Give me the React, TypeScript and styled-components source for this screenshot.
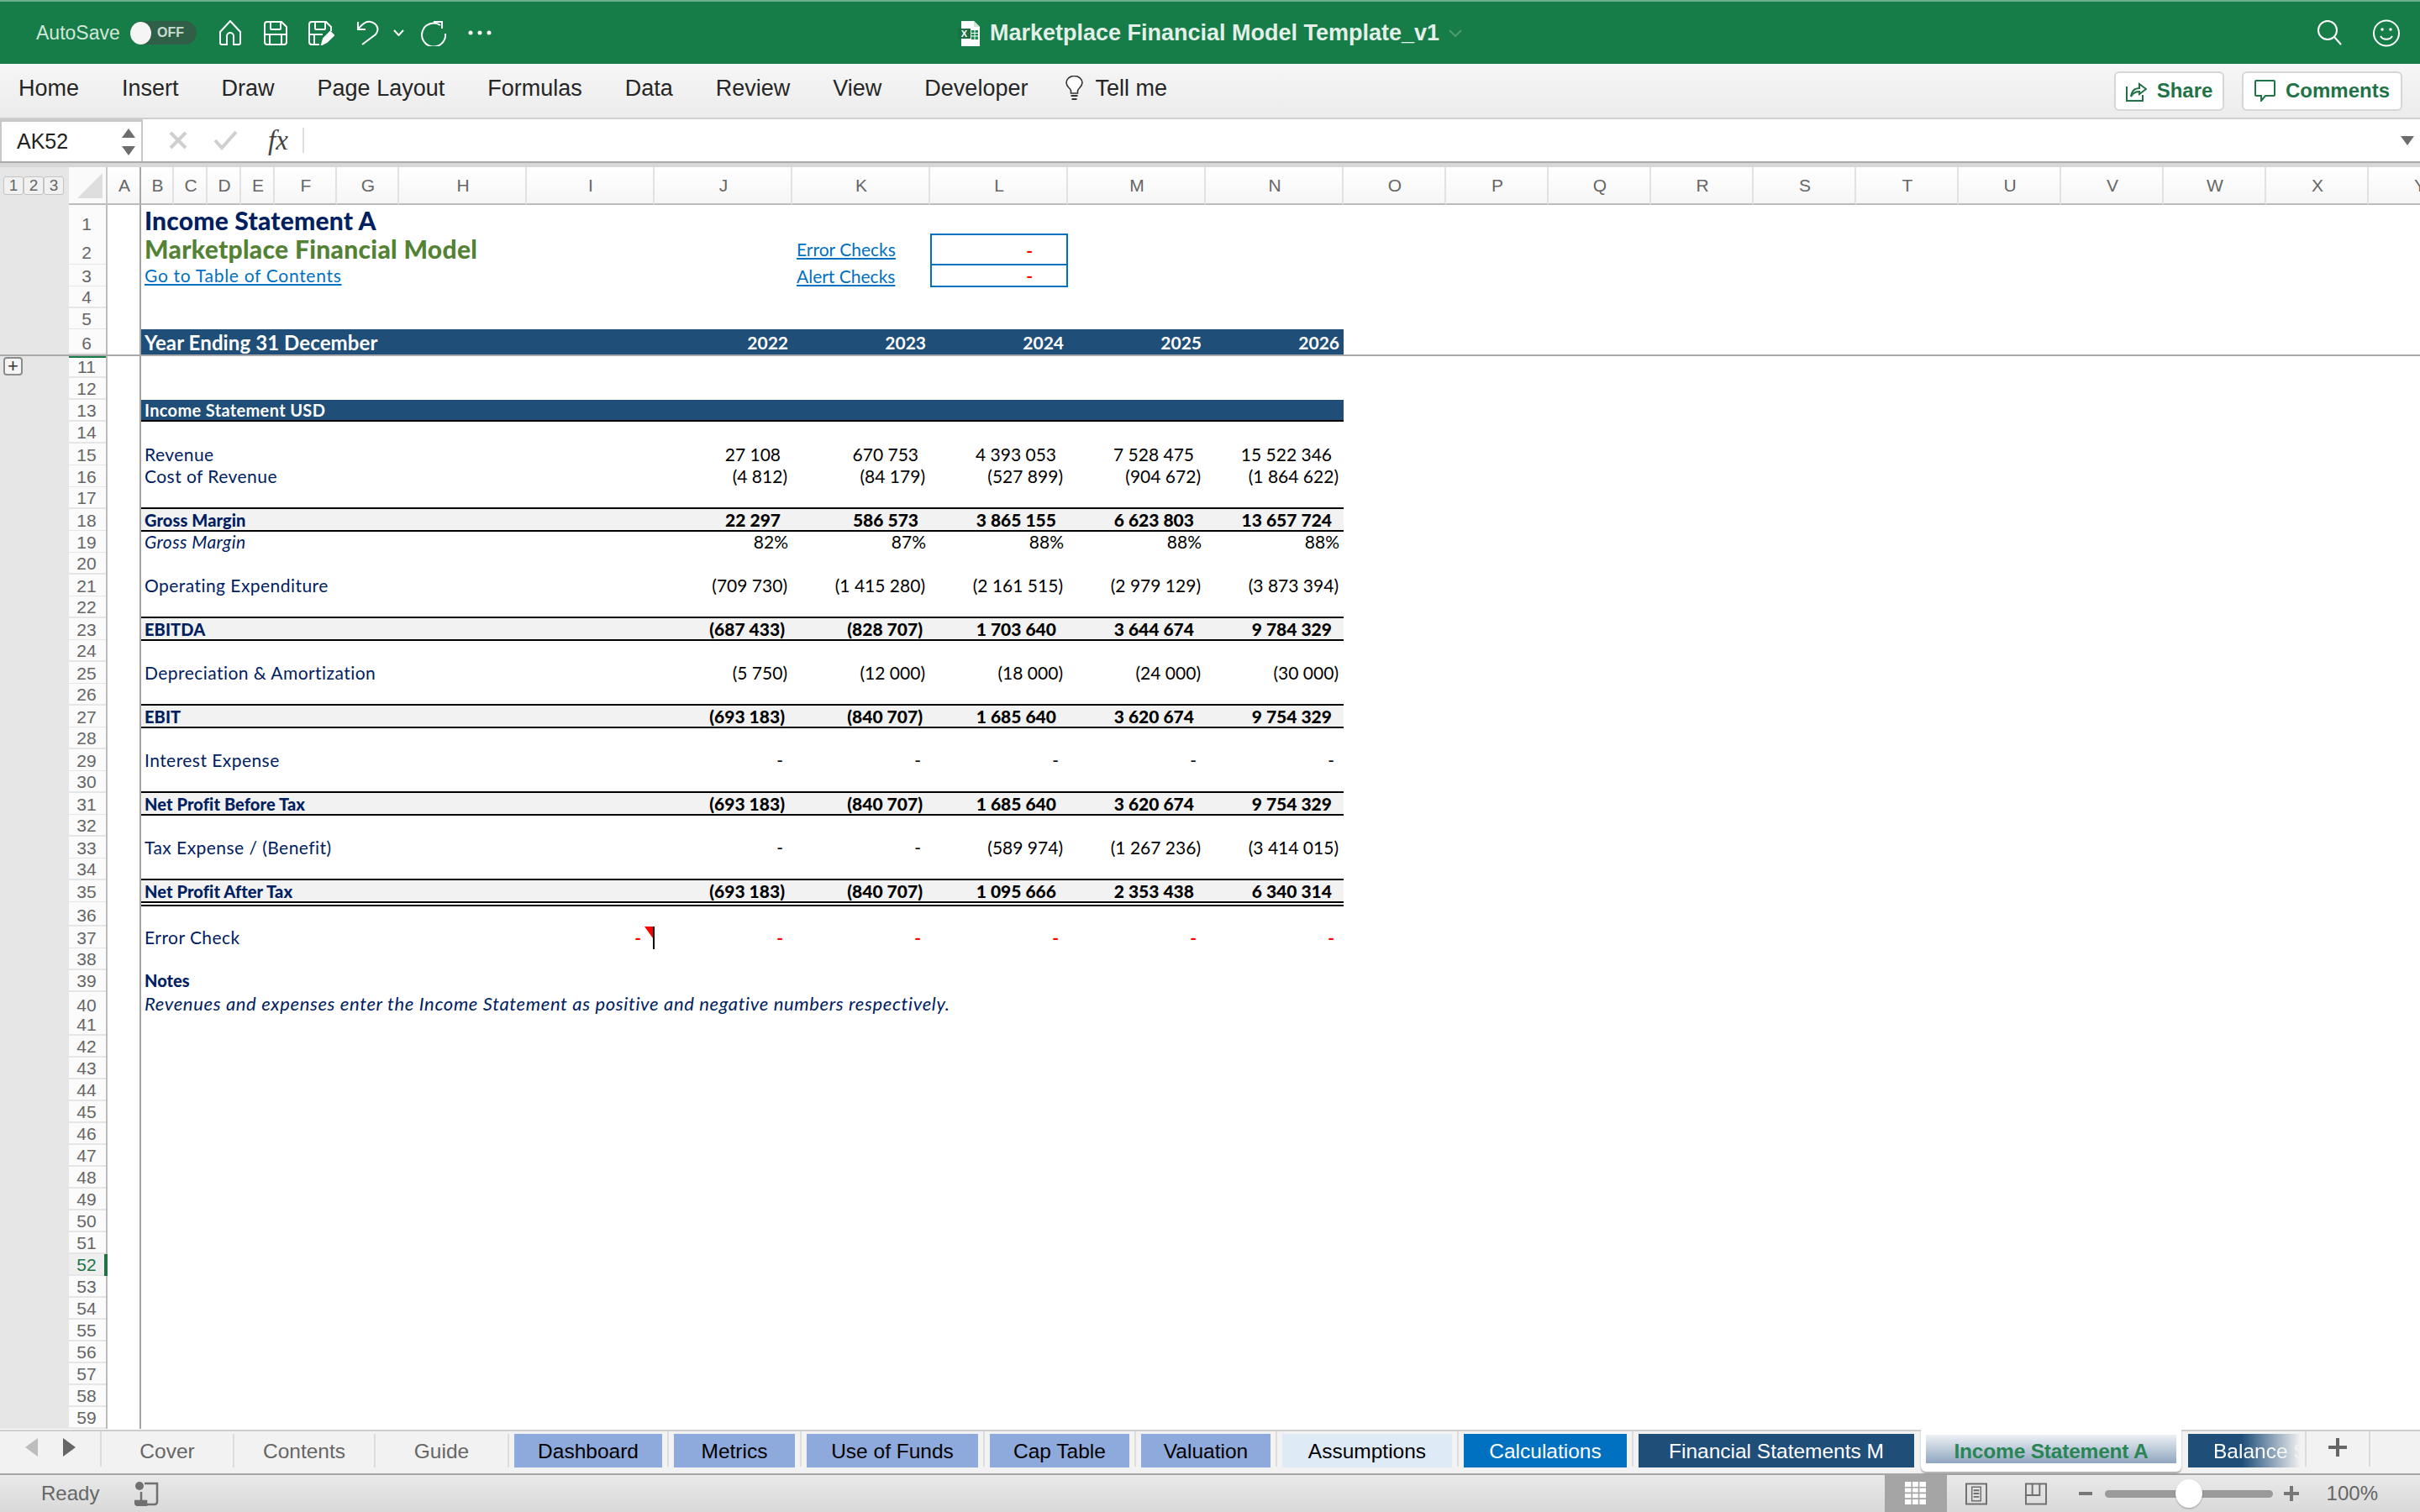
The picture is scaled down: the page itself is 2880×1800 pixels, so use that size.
import React from "react";
import styled, { createGlobalStyle } from "styled-components";

const UI_FONT = `"Liberation Sans", Arial, sans-serif`;
const CELL_FONT = `Lato, "Liberation Sans", sans-serif`;
const GREEN = "#167c48";
const NAVY = "#002060";
const BLUE_BAND = "#1f4e79";

const GlobalStyle = createGlobalStyle`
  html, body {
    margin: 0;
    padding: 0;
    width: 2880px;
    height: 1800px;
    overflow: hidden;
    background: #fff;
  }
  * { box-sizing: border-box; }
`;

const Page = styled.div`
  width: 2880px;
  height: 1800px;
  display: flex;
  flex-direction: column;
  font-family: ${UI_FONT};
`;

/* ---------- title bar ---------- */

const TitleBar = styled.header`
  height: 76px;
  flex: none;
  background: ${GREEN};
  border-top: 2px solid #6fae8d;
  display: grid;
  grid-template-columns: 1fr auto 1fr;
  align-items: center;
  color: #fff;
`;

const QuickAccess = styled.div`
  display: flex;
  align-items: center;
  padding-left: 43px;
`;

const AutoSaveLabel = styled.span`
  font-size: 23px;
  color: #d3e6db;
  width: 112px;
`;

const Toggle = styled.div`
  width: 79px;
  height: 28px;
  border-radius: 14px;
  background: #2f5f46;
  display: flex;
  align-items: center;
  gap: 7px;
  margin-right: 26px;
`;

const ToggleThumb = styled.span`
  width: 25px;
  height: 27px;
  border-radius: 50%;
  background: #f5f5f5;
`;

const ToggleText = styled.span`
  font-size: 16px;
  font-weight: 700;
  color: #c9dcd1;
`;

const QuickIcon = styled.svg<{ $gap: number; $stroke?: string }>`
  margin-right: ${(p) => p.$gap}px;
  flex: none;
  fill: none;
  stroke: ${(p) => p.$stroke || "#fff"};
  stroke-width: 2;
`;

const DocTitle = styled.div`
  display: flex;
  align-items: center;
  gap: 11px;
  font-size: 27px;
  font-weight: 700;
  color: #e4efe9;
  padding-top: 1px;
`;

const TitleRight = styled.div`
  display: flex;
  justify-content: flex-end;
  align-items: center;
  gap: 37px;
  padding-right: 24px;
`;

/* ---------- ribbon ---------- */

const Ribbon = styled.nav`
  height: 66px;
  flex: none;
  background: linear-gradient(#f6f6f6, #ececec);
  border-bottom: 2px solid #cfcfcf;
  display: flex;
  align-items: center;
  padding: 0 21px 6px 22px;
  gap: 51px;
`;

const RibbonTab = styled.span`
  font-size: 27px;
  color: #262626;
`;

const TellMe = styled.span`
  display: flex;
  align-items: center;
  gap: 14px;
  font-size: 27px;
  color: #262626;
  margin-left: -6px;
`;

const RibbonActions = styled.div`
  margin-left: auto;
  display: flex;
  gap: 21px;
  margin-top: 6px;
`;

const RibbonButton = styled.button<{ $w: number }>`
  width: ${(p) => p.$w}px;
  height: 47px;
  background: #fff;
  border: 2px solid #d6d6d6;
  border-radius: 6px;
  display: flex;
  align-items: center;
  justify-content: center;
  gap: 12px;
  padding: 0;
  font-family: ${UI_FONT};
  font-size: 24px;
  font-weight: 700;
  color: #217346;
`;

/* ---------- formula bar ---------- */

const FormulaBar = styled.div`
  height: 57px;
  flex: none;
  background: #fff;
  border-bottom: 5px solid #d8d8d8;
  box-shadow: inset 0 -2px 0 #aaa;
  display: flex;
  align-items: stretch;
`;

const NameBox = styled.div`
  width: 170px;
  height: 50px;
  border: 2px solid #c8c8c8;
  border-top-width: 3px;
  border-bottom: none;
  display: flex;
  align-items: center;
  justify-content: space-between;
  padding: 0 7px 0 18px;
  font-size: 25px;
  color: #222;
`;

const Steppers = styled.div`
  display: flex;
  flex-direction: column;
  gap: 10px;
`;

const Triangle = styled.span<{ $down?: boolean; $color?: string }>`
  width: 0;
  height: 0;
  border-left: 8px solid transparent;
  border-right: 8px solid transparent;
  ${(p) =>
    p.$down
      ? `border-top: 11px solid ${p.$color || "#6d6d6d"};`
      : `border-bottom: 11px solid ${p.$color || "#6d6d6d"};`}
`;

const FormulaTools = styled.div`
  display: flex;
  align-items: center;
  height: 50px;
  padding-left: 31px;
  gap: 31px;
`;

const FxLabel = styled.span`
  font-family: "Liberation Serif", serif;
  font-style: italic;
  font-size: 33px;
  color: #444;
  width: 32px;
  margin-left: 4px;
`;

const FormulaDivider = styled.span`
  width: 2px;
  height: 30px;
  background: #dedede;
  margin-left: -22px;
`;

const FormulaInput = styled.div`
  flex: 1;
  height: 50px;
  display: flex;
  align-items: center;
  justify-content: flex-end;
  padding-right: 7px;
`;

/* ---------- column headers ---------- */

const ColumnStrip = styled.div`
  height: 45px;
  flex: none;
  display: flex;
  overflow: hidden;
`;

const OutlineCorner = styled.div`
  width: 82px;
  flex: none;
  background: #e6e6e6;
  display: flex;
  align-items: center;
  padding: 0 0 0 4px;
  border-bottom: 2px solid #e6e6e6;
`;

const LevelButton = styled.span`
  width: 24px;
  height: 22px;
  border: 1px solid #c4c4c4;
  border-radius: 3px;
  background: #f1f1f1;
  display: flex;
  align-items: center;
  justify-content: center;
  font-size: 19px;
  color: #666;
`;

const SelectAll = styled.div`
  width: 46px;
  flex: none;
  background: #fafafa;
  border-right: 2px solid #c9c9c9;
  border-bottom: 2px solid #bbb;
  display: flex;
  align-items: center;
  padding-left: 10px;
`;

const ColumnHead = styled.div<{ $w: number; $strong?: boolean }>`
  width: ${(p) => p.$w}px;
  flex: none;
  background: linear-gradient(#fff, #f6f6f6);
  border-right: 2px solid ${(p) => (p.$strong ? "#a8a8a8" : "#e2e2e2")};
  border-bottom: 2px solid #bbb;
  display: flex;
  align-items: center;
  justify-content: center;
  padding-left: 2px;
  font-size: 21px;
  color: #666;
`;

/* ---------- sheet ---------- */

const Sheet = styled.main`
  flex: 1;
  min-height: 0;
  overflow: hidden;
  background: #fff;
  font-family: ${CELL_FONT};
`;

const Row = styled.div<{ $h: number }>`
  height: ${(p) => p.$h}px;
  display: grid;
  grid-template-columns: 82px 46px 40px 459px 152px repeat(5, 164px) 1fr;
`;

const Gutter = styled.div`
  background: #e6e6e6;
  padding: 1px 0 0 4px;
`;

const OutlinePlus = styled.span`
  width: 23px;
  height: 22px;
  border: 2px solid #8c8c8c;
  border-radius: 4px;
  background: #f5f5f5;
  display: flex;
  align-items: center;
  justify-content: center;
  font-family: ${UI_FONT};
  font-size: 22px;
  line-height: 1;
  color: #333;
`;

const RowHead = styled.div<{ $active?: boolean; $topGreen?: boolean; $lift?: number }>`
  background: ${(p) => (p.$active ? "#efefef" : "#fbfbfb")};
  border-right: ${(p) => (p.$active ? `4px solid #217346` : "2px solid #bcbcbc")};
  box-shadow: inset 0 -2px 0 #e6e6e6
    ${(p) => (p.$topGreen ? `, inset 0 2px 0 ${GREEN}` : "")};
  font-family: ${UI_FONT};
  font-size: 21px;
  line-height: 26px;
  color: ${(p) => (p.$active ? "#217346" : "#666")};
  display: flex;
  align-items: flex-end;
  justify-content: center;
  padding-right: ${(p) => (p.$active ? "0" : "2px")};
  padding-bottom: ${(p) => p.$lift || 0}px;
`;

const FrozenA = styled.div`
  border-right: 2px solid #a4a4a4;
`;

type Band = "none" | "year" | "section" | "total" | "grand";

const bandCss = (b: Band) => {
  switch (b) {
    case "year":
      return `background: ${BLUE_BAND}; color: #fff; font-weight: 700;`;
    case "section":
      return `background: ${BLUE_BAND}; color: #fff; font-weight: 700; border-bottom: 2px solid #000;`;
    case "total":
      return `background: #f2f2f2; font-weight: 900; border-bottom: 2px solid #000; box-shadow: 0 -2px 0 #000;`;
    case "grand":
      return `background: #f2f2f2; font-weight: 900; border-bottom: 2px solid #000; box-shadow: 0 -2px 0 #000, 0 2px 0 #fff, 0 4px 0 #000;`;
    default:
      return "padding-bottom: 2px;";
  }
};

const LabelCell = styled.div<{ $band: Band; $span?: boolean }>`
  ${(p) => p.$span && "grid-column: span 2;"}
  ${(p) => bandCss(p.$band)}
  display: flex;
  align-items: center;
  padding-left: 4px;
  white-space: nowrap;
  font-size: 21px;
`;

const LabelText = styled.span<{ $tone?: string; $size?: number; $spacing?: number; $weight?: number; $italic?: boolean }>`
  color: ${(p) => p.$tone || NAVY};
  font-size: ${(p) => p.$size || 21}px;
  letter-spacing: ${(p) => p.$spacing || 0}px;
  ${(p) => p.$weight && `font-weight: ${p.$weight};`}
  ${(p) => p.$italic && "font-style: italic;"}
`;

const LinkText = styled.a<{ $spacing?: number }>`
  color: #0070c0;
  text-decoration: underline;
  font-size: 21px;
  letter-spacing: ${(p) => p.$spacing || 0}px;
  white-space: nowrap;
`;

const NumCell = styled.div<{ $band: Band; $pad: number; $tone?: string; $size?: number }>`
  ${(p) => bandCss(p.$band)}
  display: flex;
  align-items: center;
  justify-content: flex-end;
  padding-right: ${(p) => p.$pad}px;
  white-space: nowrap;
  font-size: ${(p) => p.$size || 21}px;
  color: ${(p) => p.$tone || (p.$band === "year" ? "#fff" : "#000")};
  ${(p) => p.$tone && "font-weight: 700;"}
`;

const NoteCell = styled(NumCell)`
  position: relative;
  border-right: 2px solid #000;
`;

const CommentFlag = styled.span`
  position: absolute;
  top: 0;
  right: 0;
  width: 0;
  height: 0;
  border-left: 10px solid transparent;
  border-top: 14px solid #f00;
`;

const LinkCell = styled.div<{ $lift?: number }>`
  display: flex;
  align-items: center;
  padding-left: 5px;
  padding-bottom: ${(p) => p.$lift || 0}px;
`;

const CheckBoxCell = styled.div<{ $first?: boolean }>`
  border: 2px solid #0070c0;
  ${(p) => !p.$first && "border-top: none;"}
  display: flex;
  align-items: center;
  justify-content: flex-end;
  padding-right: 40px;
  color: #f00;
  font-size: 21px;
  font-weight: 700;
`;

const FreezeLine = styled.div`
  height: 2px;
  background: #a9a9a9;
`;

const Filler = styled.div``;

/* ---------- sheet tabs ---------- */

const TabBar = styled.div`
  height: 54px;
  flex: none;
  background: #f2f2f2;
  border-top: 2px solid #cdcdcd;
  border-bottom: 2px solid #a6a6a6;
  display: flex;
  align-items: stretch;
`;

const TabNav = styled.div`
  width: 121px;
  flex: none;
  display: flex;
  align-items: center;
  gap: 30px;
  padding: 0 0 4px 30px;
  border-right: 2px solid #dcdcdc;
  margin-bottom: 8px;
`;

const NavArrow = styled.span<{ $left?: boolean; $color: string }>`
  width: 0;
  height: 0;
  border-top: 11px solid transparent;
  border-bottom: 11px solid transparent;
  ${(p) => (p.$left ? `border-right: 15px solid ${p.$color};` : `border-left: 15px solid ${p.$color};`)}
`;

const TabSlot = styled.div<{ $last?: boolean; $tight?: boolean }>`
  flex: none;
  padding: ${(p) => (p.$tight ? "3px 5px 0 0" : p.$last ? "3px 0 0 6px" : "3px 6px 0")};
  border-right: ${(p) => (p.$last ? "none" : "2px solid #dcdcdc")};
  margin-bottom: 8px;
  display: flex;
`;

const PlainTab = styled.div<{ $w: number }>`
  width: ${(p) => p.$w}px;
  flex: none;
  height: 40px;
  margin-top: 3px;
  border-right: 2px solid #dcdcdc;
  display: flex;
  align-items: center;
  justify-content: center;
  padding-top: 1px;
  font-size: 24.5px;
  color: #666;
`;

const ColorTab = styled.div<{ $w: number; $bg: string; $fg: string }>`
  width: ${(p) => p.$w}px;
  height: 40px;
  background: ${(p) => p.$bg};
  color: ${(p) => p.$fg};
  display: flex;
  align-items: center;
  justify-content: center;
  padding-top: 1px;
  font-size: 24.5px;
  white-space: nowrap;
`;

const ActiveTabFrame = styled.div`
  width: 310px;
  flex: none;
  margin: -2px 8px 0 8px;
  height: 50px;
  padding: 6px 6px 0;
  background: #fff;
  border-radius: 0 0 6px 6px;
  box-shadow: 0 2px 2px rgba(0, 0, 0, 0.3);
`;

const ActiveTabFace = styled.div`
  height: 34px;
  background: linear-gradient(#eef1f5, #8fa6c0);
  display: flex;
  align-items: center;
  justify-content: center;
  font-size: 24.5px;
  font-weight: 700;
  color: #2a8555;
  letter-spacing: -0.2px;
  padding-top: 5px;
`;

const FadingTab = styled(ColorTab)`
  overflow: hidden;
  justify-content: flex-start;
  padding-left: 30px;
  -webkit-mask-image: linear-gradient(to right, #000 48%, transparent 100%);
  mask-image: linear-gradient(to right, #000 48%, transparent 100%);
`;

const AddTab = styled.div`
  width: 76px;
  flex: none;
  margin-bottom: 8px;
  border-right: 2px solid #dcdcdc;
  display: flex;
  align-items: center;
  justify-content: center;
  padding-bottom: 4px;
`;

/* ---------- status bar ---------- */

const StatusBar = styled.footer`
  height: 44px;
  flex: none;
  background: linear-gradient(#e9e9e9, #d9d9d9);
  display: flex;
  align-items: center;
  padding-left: 49px;
`;

const StatusText = styled.span`
  font-size: 24px;
  color: #666;
  width: 111px;
`;

const ViewControls = styled.div`
  margin-left: auto;
  height: 100%;
  display: flex;
  align-items: center;
  padding-right: 50px;
`;

const ViewButton = styled.div<{ $active?: boolean; $ml?: number }>`
  height: 100%;
  width: ${(p) => (p.$active ? "74px" : "26px")};
  margin-left: ${(p) => p.$ml || 0}px;
  background: ${(p) => (p.$active ? "#a5a5a5" : "transparent")};
  display: flex;
  align-items: center;
  justify-content: center;
`;

const ZoomMinus = styled.span`
  width: 16px;
  height: 4px;
  background: #777;
  margin-left: 38px;
`;

const ZoomTrack = styled.div`
  position: relative;
  width: 200px;
  height: 9px;
  border-radius: 5px;
  background: #9a9a9a;
  margin-left: 15px;
`;

const ZoomThumb = styled.span`
  position: absolute;
  left: 84px;
  top: -13px;
  width: 32px;
  height: 34px;
  border-radius: 50%;
  background: #fff;
  box-shadow: 0 1px 2px rgba(0, 0, 0, 0.3);
`;

const ZoomPlus = styled.svg`
  margin-left: 13px;
  flex: none;
`;

const ZoomText = styled.span`
  font-size: 24px;
  color: #666;
  margin-left: 33px;
`;

/* ---------- data ---------- */

const COLUMNS: [string, number][] = [
  ["A", 40], ["B", 39], ["C", 40], ["D", 40], ["E", 40], ["F", 74], ["G", 74], ["H", 152], ["I", 152],
  ["J", 164], ["K", 164], ["L", 164], ["M", 164], ["N", 164],
  ["O", 122], ["P", 122], ["Q", 122], ["R", 122], ["S", 122], ["T", 122], ["U", 122], ["V", 122], ["W", 122], ["X", 122], ["Y", 122],
];

type DataRow = {
  label?: string;
  band?: Band;
  italic?: boolean;
  values?: string[];
  red?: boolean;
};

const DASHES = ["-", "-", "-", "-", "-"];

const DATA: Record<number, DataRow> = {
  13: { label: "Income Statement USD", band: "section" },
  15: { label: "Revenue", values: ["27 108", "670 753", "4 393 053", "7 528 475", "15 522 346"] },
  16: { label: "Cost of Revenue", values: ["(4 812)", "(84 179)", "(527 899)", "(904 672)", "(1 864 622)"] },
  18: { label: "Gross Margin", band: "total", values: ["22 297", "586 573", "3 865 155", "6 623 803", "13 657 724"] },
  19: { label: "Gross Margin", italic: true, values: ["82%", "87%", "88%", "88%", "88%"] },
  21: { label: "Operating Expenditure", values: ["(709 730)", "(1 415 280)", "(2 161 515)", "(2 979 129)", "(3 873 394)"] },
  23: { label: "EBITDA", band: "total", values: ["(687 433)", "(828 707)", "1 703 640", "3 644 674", "9 784 329"] },
  25: { label: "Depreciation & Amortization", values: ["(5 750)", "(12 000)", "(18 000)", "(24 000)", "(30 000)"] },
  27: { label: "EBIT", band: "total", values: ["(693 183)", "(840 707)", "1 685 640", "3 620 674", "9 754 329"] },
  29: { label: "Interest Expense", values: DASHES },
  31: { label: "Net Profit Before Tax", band: "total", values: ["(693 183)", "(840 707)", "1 685 640", "3 620 674", "9 754 329"] },
  33: { label: "Tax Expense / (Benefit)", values: ["-", "-", "(589 974)", "(1 267 236)", "(3 414 015)"] },
  35: { label: "Net Profit After Tax", band: "grand", values: ["(693 183)", "(840 707)", "1 095 666", "2 353 438", "6 340 314"] },
  37: { label: "Error Check", values: DASHES, red: true },
};

const padFor = (v: string, bold: boolean) => {
  if (v === "-") return 11;
  if (v.endsWith(")")) return bold ? 9 : 6;
  if (v.endsWith("%")) return 5;
  return 14;
};

const BODY_ROWS = Array.from({ length: 49 }, (_, i) => i + 11);

const YEARS = ["2022", "2023", "2024", "2025", "2026"];

const BLUE_TABS: [string, number][] = [
  ["Dashboard", 176],
  ["Metrics", 144],
  ["Use of Funds", 204],
  ["Cap Table", 166],
  ["Valuation", 154],
];

/* ---------- small drawings ---------- */

const SaveShape = () => (
  <>
    <path d="M4 1H21L27 7V25a3 3 0 0 1-3 3H4a3 3 0 0 1-3-3V4a3 3 0 0 1 3-3Z" />
    <path d="M8 1V9a1 1 0 0 0 1 1H19a1 1 0 0 0 1-1V1M1 16H27M7 16V28M21 16V28" />
  </>
);

const ExcelDocIcon = () => (
  <svg width="27" height="30" viewBox="0 0 27 30">
    <path d="M4 0H19L26 7V30H4Z" fill="#fff" />
    <path d="M19 0L26 7H19Z" fill="#cfe3d8" />
    <rect x="0" y="9" width="15" height="12" fill="#1d6f42" />
    <text x="7.5" y="19" fontSize="11" fontWeight="700" textAnchor="middle" fill="#fff" fontFamily="Liberation Sans">
      X
    </text>
    <path d="M16 11H24V22H16Z" fill="#1d8a4f" />
    <path d="M16 14.5H24M16 18H24M20 11V22" stroke="#fff" strokeWidth="1" />
  </svg>
);

const App = () => (
  <Page>
    <GlobalStyle />
    <TitleBar>
      <QuickAccess>
        <AutoSaveLabel>AutoSave</AutoSaveLabel>
        <Toggle>
          <ToggleThumb />
          <ToggleText>OFF</ToggleText>
        </Toggle>
        <QuickIcon $gap={26} width="28" height="30" viewBox="0 0 28 30">
          <path d="M2 14L14 1L26 14V27a2 2 0 0 1-2 2H18V19a4 4 0 0 0-8 0V29H4a2 2 0 0 1-2-2Z" />
        </QuickIcon>
        <QuickIcon $gap={25} width="28" height="29" viewBox="0 0 28 29">
          <SaveShape />
        </QuickIcon>
        <QuickIcon $gap={26} width="31" height="29" viewBox="0 0 31 29">
          <path d="M13 28H4a3 3 0 0 1-3-3V4a3 3 0 0 1 3-3H21L27 7V12" />
          <path d="M8 1V9a1 1 0 0 0 1 1H19a1 1 0 0 0 1-1V1M1 16H17M7 16V28" />
          <path d="M16 28L18 21L26 13L30 17L22 25Z" fill="#fff" />
        </QuickIcon>
        <QuickIcon $gap={17} width="27" height="30" viewBox="0 0 27 30">
          <path d="M2 2V11H11M2 11C8 3 13 1 17 2C25 4 28 11 23 17L7 29" />
        </QuickIcon>
        <QuickIcon $gap={20} width="13" height="8" viewBox="0 0 13 8">
          <path d="M1 1L6.5 7L12 1" />
        </QuickIcon>
        <QuickIcon $gap={25} width="31" height="31" viewBox="0 0 31 31">
          <path d="M23 6A14 14 0 1 0 29 16" />
          <path d="M15 2H25V10" />
        </QuickIcon>
        <QuickIcon $gap={0} width="28" height="6" viewBox="0 0 28 6">
          <circle cx="3" cy="3" r="2.5" fill="#fff" stroke="none" />
          <circle cx="14" cy="3" r="2.5" fill="#fff" stroke="none" />
          <circle cx="25" cy="3" r="2.5" fill="#fff" stroke="none" />
        </QuickIcon>
      </QuickAccess>
      <DocTitle>
        <ExcelDocIcon />
        Marketplace Financial Model Template_v1
        <QuickIcon $gap={0} $stroke="#4f9b74" width="16" height="9" viewBox="0 0 16 9">
          <path d="M1 1L8 8L15 1" />
        </QuickIcon>
      </DocTitle>
      <TitleRight>
        <QuickIcon $gap={0} width="29" height="30" viewBox="0 0 29 30">
          <circle cx="12" cy="12" r="11" />
          <path d="M20 20L28 29" />
        </QuickIcon>
        <QuickIcon $gap={0} width="32" height="33" viewBox="0 0 32 33">
          <circle cx="16" cy="16.5" r="15" />
          <circle cx="11" cy="12" r="1.8" fill="#fff" stroke="none" />
          <circle cx="21" cy="12" r="1.8" fill="#fff" stroke="none" />
          <path d="M9 20C12 25 20 25 23 20" />
        </QuickIcon>
      </TitleRight>
    </TitleBar>

    <Ribbon>
      {["Home", "Insert", "Draw", "Page Layout", "Formulas", "Data", "Review", "View", "Developer"].map((t) => (
        <RibbonTab key={t}>{t}</RibbonTab>
      ))}
      <TellMe>
        <svg width="21" height="30" viewBox="0 0 21 30" fill="none" stroke="#333" strokeWidth="1.6">
          <path d="M6.5 21V18C6 15 1 13 1 8.5a9.5 8 0 0 1 19 0C20 13 15 15 14.5 18V21Z" fill="#fff" />
          <path d="M6.5 24H14.5M7.5 28H13.5" strokeWidth="2" />
        </svg>
        Tell me
      </TellMe>
      <RibbonActions>
        <RibbonButton $w={131}>
          <svg width="25" height="25" viewBox="0 0 25 25" fill="none" stroke="#217346" strokeWidth="2">
            <path d="M1 7V24H20V17" />
            <path d="M6 19C7 12 11 9 16 9V4L24 10L16 16V13C11 13 8 15 6 19Z" />
          </svg>
          Share
        </RibbonButton>
        <RibbonButton $w={191}>
          <svg width="25" height="26" viewBox="0 0 25 26" fill="none" stroke="#217346" strokeWidth="2">
            <path d="M2 1H23a1 1 0 0 1 1 1V18a1 1 0 0 1-1 1H13L8 25V19H2a1 1 0 0 1-1-1V2a1 1 0 0 1 1-1Z" />
          </svg>
          Comments
        </RibbonButton>
      </RibbonActions>
    </Ribbon>

    <FormulaBar>
      <NameBox>
        AK52
        <Steppers>
          <Triangle />
          <Triangle $down />
        </Steppers>
      </NameBox>
      <FormulaTools>
        <svg width="22" height="22" viewBox="0 0 22 22" fill="none" stroke="#cfcfcf" strokeWidth="4">
          <path d="M2 2L20 20M20 2L2 20" />
        </svg>
        <svg width="30" height="24" viewBox="0 0 30 24" fill="none" stroke="#cfcfcf" strokeWidth="4">
          <path d="M2 12L10 21L27 2" />
        </svg>
        <FxLabel>fx</FxLabel>
        <FormulaDivider />
      </FormulaTools>
      <FormulaInput>
        <Triangle $down />
      </FormulaInput>
    </FormulaBar>

    <ColumnStrip>
      <OutlineCorner>
        <LevelButton>1</LevelButton>
        <LevelButton>2</LevelButton>
        <LevelButton>3</LevelButton>
      </OutlineCorner>
      <SelectAll>
        <svg width="30" height="30" viewBox="0 0 30 30">
          <path d="M30 0V30H0Z" fill="#dedede" />
        </svg>
      </SelectAll>
      {COLUMNS.map(([c, w]) => (
        <ColumnHead key={c} $w={w} $strong={c === "A"}>
          {c}
        </ColumnHead>
      ))}
    </ColumnStrip>

    <Sheet>
      <Row $h={34}>
        <Gutter />
        <RowHead $lift={2}>1</RowHead>
        <FrozenA />
        <LabelCell $band="none" $span>
          <LabelText $size={30} $weight={900} $spacing={0.2}>
            Income Statement A
          </LabelText>
        </LabelCell>
      </Row>
      <Row $h={37}>
        <Gutter />
        <RowHead $lift={2}>2</RowHead>
        <FrozenA />
        <LabelCell $band="none" $span>
          <LabelText $size={30} $weight={900} $tone="#548235" $spacing={0.3}>
            Marketplace Financial Model
          </LabelText>
        </LabelCell>
        <Filler />
        <LinkCell $lift={2}>
          <LinkText>Error Checks</LinkText>
        </LinkCell>
        <CheckBoxCell $first>-</CheckBoxCell>
      </Row>
      <Row $h={26}>
        <Gutter />
        <RowHead>3</RowHead>
        <FrozenA />
        <LabelCell $band="none" $span>
          <LinkText $spacing={0.7}>Go to Table of Contents</LinkText>
        </LabelCell>
        <Filler />
        <LinkCell>
          <LinkText>Alert Checks</LinkText>
        </LinkCell>
        <CheckBoxCell>-</CheckBoxCell>
      </Row>
      <Row $h={26}>
        <Gutter />
        <RowHead>4</RowHead>
        <FrozenA />
      </Row>
      <Row $h={25}>
        <Gutter />
        <RowHead>5</RowHead>
        <FrozenA />
      </Row>
      <Row $h={30}>
        <Gutter />
        <RowHead>6</RowHead>
        <FrozenA />
        <LabelCell $band="year" $span>
          <LabelText $tone="#fff" $size={24} $spacing={0.1}>
            Year Ending 31 December
          </LabelText>
        </LabelCell>
        {YEARS.map((y) => (
          <NumCell key={y} $band="year" $pad={5} $size={21}>
            {y}
          </NumCell>
        ))}
      </Row>
      <FreezeLine />

      {BODY_ROWS.map((n) => {
        const row = DATA[n] || {};
        const band = row.band || "none";
        const bold = band === "total" || band === "grand";
        const isNotes = n === 39 || n === 40;
        return (
          <Row key={n} $h={n === 36 ? 29 : 26}>
            <Gutter>{n === 11 && <OutlinePlus>+</OutlinePlus>}</Gutter>
            <RowHead $active={n === 52} $topGreen={n === 11}>
              {n}
            </RowHead>
            <FrozenA />
            {n === 37 ? (
              <>
                <LabelCell $band="none">
                  <LabelText $spacing={0.45}>{row.label}</LabelText>
                </LabelCell>
                <NoteCell $band="none" $pad={14} $tone="#f00">
                  -
                  <CommentFlag />
                </NoteCell>
              </>
            ) : isNotes ? (
              <LabelCell $band="none" $span>
                {n === 39 ? (
                  <LabelText $weight={900} $size={20}>
                    Notes
                  </LabelText>
                ) : (
                  <LabelText $italic $size={22} $spacing={0.65}>
                    Revenues and expenses enter the Income Statement as positive and negative numbers respectively.
                  </LabelText>
                )}
              </LabelCell>
            ) : row.label ? (
              <LabelCell $band={band} $span>
                <LabelText
                  $tone={band === "section" ? "#fff" : NAVY}
                  $size={band === "none" ? 21 : 20}
                  $spacing={band === "none" ? 0.45 : band === "section" ? 0.35 : 0.1}
                  $italic={row.italic}
                >
                  {row.label}
                </LabelText>
              </LabelCell>
            ) : null}
            {(row.values || (band === "section" ? ["", "", "", "", ""] : [])).map((v, i) => (
              <NumCell
                key={i}
                $band={band}
                $pad={padFor(v, bold)}
                $tone={row.red ? "#f00" : undefined}
              >
                {v}
              </NumCell>
            ))}
          </Row>
        );
      })}
    </Sheet>

    <TabBar>
      <TabNav>
        <NavArrow $left $color="#bdbdbd" />
        <NavArrow $color="#666" />
      </TabNav>
      <PlainTab $w={158}>Cover</PlainTab>
      <PlainTab $w={168}>Contents</PlainTab>
      <PlainTab $w={159}>Guide</PlainTab>
      {BLUE_TABS.map(([t, w]) => (
        <TabSlot key={t}>
          <ColorTab $w={w} $bg="#8ea9db" $fg="#000">
            {t}
          </ColorTab>
        </TabSlot>
      ))}
      <TabSlot>
        <ColorTab $w={202} $bg="#deeaf6" $fg="#000">
          Assumptions
        </ColorTab>
      </TabSlot>
      <TabSlot>
        <ColorTab $w={194} $bg="#0070c0" $fg="#fff">
          Calculations
        </ColorTab>
      </TabSlot>
      <TabSlot $last>
        <ColorTab $w={328} $bg={BLUE_BAND} $fg="#fff">
          Financial Statements M
        </ColorTab>
      </TabSlot>
      <ActiveTabFrame>
        <ActiveTabFace>Income Statement A</ActiveTabFace>
      </ActiveTabFrame>
      <TabSlot $tight>
        <FadingTab $w={134} $bg={BLUE_BAND} $fg="#fff">
          Balance Sheet A
        </FadingTab>
      </TabSlot>
      <AddTab>
        <svg width="22" height="22" viewBox="0 0 22 22" fill="#666">
          <path d="M9 0H13V9H22V13H13V22H9V13H0V9H9Z" />
        </svg>
      </AddTab>
    </TabBar>

    <StatusBar>
      <StatusText>Ready</StatusText>
      <svg width="30" height="30" viewBox="0 0 30 30" fill="none" stroke="#707070" strokeWidth="2.5">
        <circle cx="6" cy="6" r="5" fill="#707070" stroke="none" />
        <path d="M12 3H27V25a3 3 0 0 1-3 3H6" />
        <path d="M8 13V24" />
        <path d="M1 24H14V29H4a3 3 0 0 1-3-3Z" fill="#707070" />
      </svg>
      <ViewControls>
        <ViewButton $active>
          <svg width="27" height="44" viewBox="0 0 27 44" fill="none" stroke="#fff" strokeWidth="2">
            <rect x="1" y="8" width="25" height="27" fill="#fff" stroke="none" />
            <path d="M9.3 8V35M17.6 8V35M1 14.7H26M1 21.4H26M1 28.1H26" stroke="#a5a5a5" strokeWidth="1.6" />
          </svg>
        </ViewButton>
        <ViewButton $ml={22}>
          <svg width="27" height="27" viewBox="0 0 27 27" fill="none" stroke="#6e6e6e" strokeWidth="2">
            <rect x="1" y="1" width="25" height="25" />
            <path d="M8 5H19V22H8Z" strokeWidth="1.5" />
            <path d="M10 9H17M10 13H17M10 17H17" strokeWidth="2" />
          </svg>
        </ViewButton>
        <ViewButton $ml={45}>
          <svg width="27" height="27" viewBox="0 0 27 27" fill="none" stroke="#6e6e6e" strokeWidth="2">
            <rect x="1" y="1" width="25" height="25" />
            <path d="M1 15H18V1M9 1V15" />
          </svg>
        </ViewButton>
        <ZoomMinus />
        <ZoomTrack>
          <ZoomThumb />
        </ZoomTrack>
        <ZoomPlus width="18" height="18" viewBox="0 0 18 18" fill="#777">
          <path d="M7 0H11V7H18V11H11V18H7V11H0V7H7Z" />
        </ZoomPlus>
        <ZoomText>100%</ZoomText>
      </ViewControls>
    </StatusBar>
  </Page>
);

export default App;
